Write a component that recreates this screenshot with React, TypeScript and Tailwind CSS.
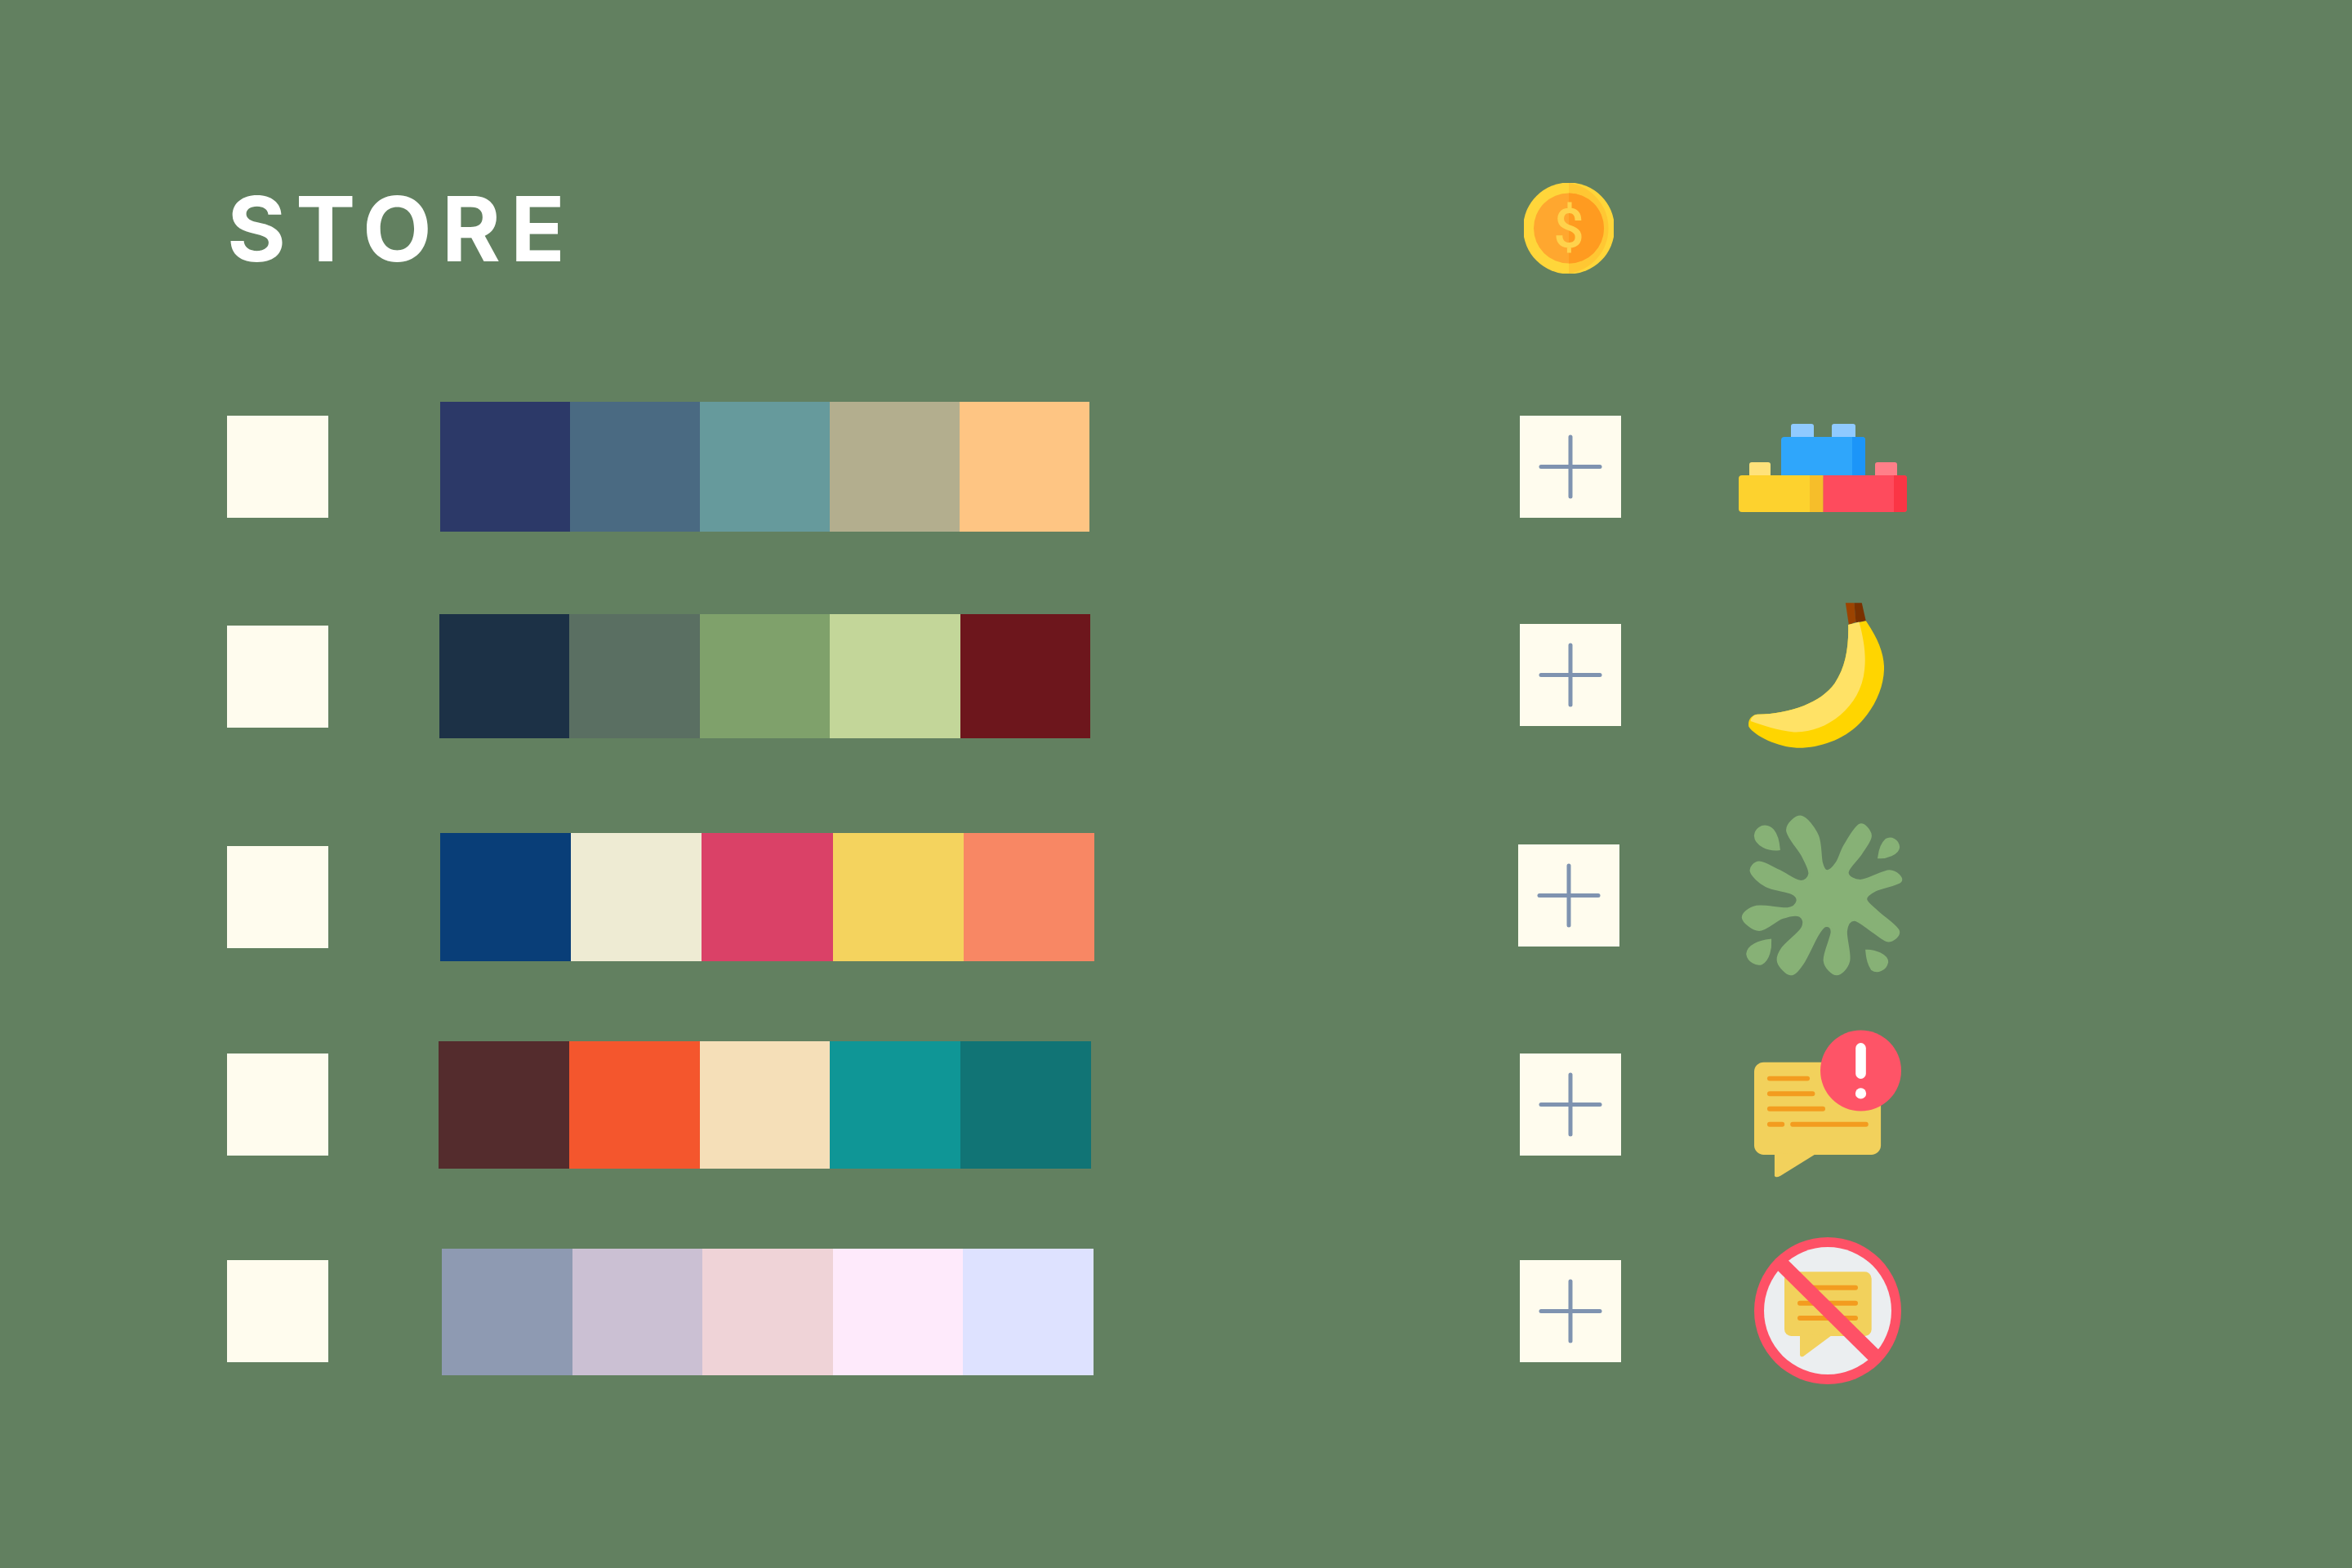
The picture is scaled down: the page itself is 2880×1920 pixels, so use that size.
function Coin() {
  return (
    <svg width="110" height="111" viewBox="0 0 110 111" className="ml-[1174px]">
      <circle cx="55" cy="55.5" r="56" fill="#ffd63a" />
      <path d="M55 0 A56 56 0 0 1 55 111 Z" fill="#ffc733" />
      <circle cx="55" cy="55.5" r="43" fill="#ffa72f" />
      <path d="M55 12.5 A43 43 0 0 1 55 98.5 Z" fill="#ff9b20" />
      <text x="55" y="79" textAnchor="middle" fontSize="66" fontWeight="500" fill="#ffd24c" fontFamily="Roboto, sans-serif">
        $
      </text>
    </svg>
  );
}

function Lego() {
  return (
    <svg width="206" height="108" viewBox="0 0 206 108">
      <rect x="64" y="0" width="28" height="20" rx="3" fill="#90caff" />
      <rect x="114" y="0" width="29" height="20" rx="3" fill="#90caff" />
      <rect x="52" y="16" width="103" height="50" rx="4" fill="#2fa6fb" />
      <path d="M139 16 H151 a4 4 0 0 1 4 4 V66 H139 Z" fill="#1c95f8" />
      <rect x="13" y="47" width="26" height="20" rx="3" fill="#ffe27a" />
      <rect x="167" y="47" width="27" height="20" rx="3" fill="#ff7f89" />
      <path d="M4 63 H103.5 V108 H4 a4 4 0 0 1 -4 -4 V67 a4 4 0 0 1 4 -4 Z" fill="#fdd22e" />
      <rect x="87" y="63" width="16.5" height="45" fill="#f6be2a" />
      <path d="M103.5 63 H202 a4 4 0 0 1 4 4 V104 a4 4 0 0 1 -4 4 H103.5 Z" fill="#fe4b5d" />
      <path d="M190 63 H202 a4 4 0 0 1 4 4 V104 a4 4 0 0 1 -4 4 H190 Z" fill="#fb3545" />
    </svg>
  );
}

function Banana() {
  return (
    <svg width="166" height="178" viewBox="182 54 500 534">
      <path d="M540 54 L572 54 L578 124 L552 134 Z" fill="#9c4300" />
      <path d="M572 54 L600 54 L615 120 L578 126 Z" fill="#7a3100" />
      <path
        d="M550 134 L615 120 C660 185 684 245 682 300 C680 370 645 445 590 500 C530 560 440 590 360 588 C290 585 205 545 183 510 C178 485 195 466 215 465 C340 462 450 420 500 350 C540 290 552 220 550 134 Z"
        fill="#ffd500"
      />
      <path
        d="M550 134 L590 124 C608 190 616 245 610 300 C603 370 570 425 520 468 C470 510 410 532 350 530 C290 526 235 505 190 490 C192 476 202 466 215 465 C340 462 450 420 500 350 C540 290 552 220 550 134 Z"
        fill="#ffe266"
      />
    </svg>
  );
}

// smooth closed path through outline points read off the picture
function smooth(p: number[][]) {
  const n = p.length;
  let d = `M${p[0][0]} ${p[0][1]}`;
  for (let i = 0; i < n; i++) {
    const [a, b, c, e] = [p[(i + n - 1) % n], p[i], p[(i + 1) % n], p[(i + 2) % n]];
    d += ` C${b[0] + (c[0] - a[0]) / 6} ${b[1] + (c[1] - a[1]) / 6} ${c[0] - (e[0] - b[0]) / 6} ${c[1] - (e[1] - b[1]) / 6} ${c[0]} ${c[1]}`;
  }
  return d + " Z";
}

const splat = [
  [475, 320], [455, 290], [440, 190], [380, 120], [328, 170], [385, 265], [410, 330], [375, 358], [300, 320], [225, 288],
  [195, 322], [250, 375], [345, 402], [365, 432], [330, 458], [215, 451], [165, 492], [225, 537], [310, 492], [375, 485],
  [383, 530], [310, 605], [295, 655], [340, 700], [385, 660], [440, 555], [470, 522], [492, 545], [465, 650], [510, 700],
  [555, 650], [545, 540], [575, 500], [640, 540], [700, 577], [737, 540], [660, 470], [618, 425], [650, 392], [745, 358],
  [705, 320], [600, 355], [550, 325], [600, 255], [635, 190], [595, 150], [540, 225], [510, 290],
];

function Splat() {
  return (
    <svg width="194" height="193" viewBox="165 120 582 580" fill="#87b176" stroke="#87b176" strokeWidth="8" overflow="visible">
      <path d={smooth(splat)} />
      <path d="M298 240 C260 245 212 225 210 190 C212 165 235 152 255 157 C285 165 295 205 298 240 Z" />
      <path d="M665 270 C690 272 737 258 738 232 C735 205 710 195 692 205 C675 220 668 245 665 270 Z" />
      <path d="M266 574 C225 578 183 595 181 625 C185 652 215 668 235 660 C260 645 268 605 266 574 Z" />
      <path d="M620 613 C650 612 696 630 696 655 C690 685 658 695 640 682 C625 660 622 640 620 613 Z" />
    </svg>
  );
}

function ChatAlert() {
  return (
    <svg width="180" height="181" viewBox="203 123 542 542">
      <rect x="203" y="241" width="467" height="341" rx="35" fill="#f2d15c" />
      <path d="M278 575 L425 582 L300 660 Q280 670 278 658 Z" fill="#f2d15c" />
      <g stroke="#f39c1f" strokeWidth="18" strokeLinecap="round">
        <line x1="260" y1="301" x2="399" y2="301" />
        <line x1="260" y1="357" x2="418" y2="357" />
        <line x1="260" y1="413" x2="456" y2="413" />
        <line x1="260" y1="470" x2="306" y2="470" />
        <line x1="345" y1="470" x2="615" y2="470" />
      </g>
      <circle cx="596" cy="272" r="149" fill="#fe5467" />
      <rect x="577" y="170" width="38" height="132" rx="19" fill="#fff" />
      <circle cx="596" cy="356" r="20" fill="#fff" />
    </svg>
  );
}

function NoChat() {
  return (
    <svg width="180" height="180" viewBox="204 105 540 540">
      <circle cx="474" cy="375" r="270" fill="#fe5166" />
      <circle cx="474" cy="375" r="234" fill="#ebeef0" />
      <rect x="315" y="232" width="320" height="236" rx="25" fill="#f2d15c" />
      <path d="M372 460 L485 468 L385 542 Q372 548 372 535 Z" fill="#f2d15c" />
      <g stroke="#f39c1f" strokeWidth="18" strokeLinecap="round">
        <line x1="372" y1="290" x2="576" y2="290" />
        <line x1="372" y1="347" x2="576" y2="347" />
        <line x1="372" y1="402" x2="576" y2="402" />
      </g>
      <line x1="297" y1="196" x2="653" y2="548" stroke="#fe5166" strokeWidth="54" />
    </svg>
  );
}

function PlusBox({ className }: { className: string }) {
  return (
    <div className={`w-[124px] h-[125px] bg-[#fffcee] flex items-center justify-center ${className}`}>
      <svg width="78" height="79" viewBox="0 0 78 79" stroke="#7f93b0" strokeWidth="5" strokeLinecap="round">
        <line x1="3" y1="39.5" x2="75" y2="39.5" />
        <line x1="39" y1="3" x2="39" y2="76" />
      </svg>
    </div>
  );
}

const rows = [
  {
    row: "h-[159px] mt-[157px]",
    box: "mt-[17px]",
    palette: "ml-[137px] w-[795px] h-[159px]",
    plus: "ml-[527px] mt-[17px]",
    icon: "ml-[144px] mt-[27px]",
    colors: ["bg-[#2c3968]", "bg-[#4a6a82]", "bg-[#669a9c]", "bg-[#b3ae8e]", "bg-[#fec583]"],
    Icon: Lego,
  },
  {
    row: "h-[152px] mt-[101px]",
    box: "mt-[14px]",
    palette: "ml-[136px] w-[797px] h-[152px]",
    plus: "ml-[526px] mt-[12px]",
    icon: "ml-[156px] mt-[-14px]",
    colors: ["bg-[#1c3146]", "bg-[#5a6f62]", "bg-[#7fa16b]", "bg-[#c3d699]", "bg-[#6d161c]"],
    Icon: Banana,
  },
  {
    row: "h-[157px] mt-[116px]",
    box: "mt-[16px]",
    palette: "ml-[137px] w-[801px] h-[157px]",
    plus: "ml-[519px] mt-[14px]",
    icon: "ml-[151px] mt-[-20px]",
    colors: ["bg-[#093e78]", "bg-[#eeebd3]", "bg-[#da4167]", "bg-[#f4d35e]", "bg-[#f88764]"],
    Icon: Splat,
  },
  {
    row: "h-[156px] mt-[98px]",
    box: "mt-[15px]",
    palette: "ml-[135px] w-[799px] h-[156px]",
    plus: "ml-[525px] mt-[15px]",
    icon: "ml-[163px] mt-[-14px]",
    colors: ["bg-[#542c2d]", "bg-[#f4562d]", "bg-[#f5dfb8]", "bg-[#0f9696]", "bg-[#117475]"],
    Icon: ChatAlert,
  },
  {
    row: "h-[155px] mt-[98px]",
    box: "mt-[14px]",
    palette: "ml-[139px] w-[798px] h-[155px]",
    plus: "ml-[522px] mt-[14px]",
    icon: "ml-[163px] mt-[-14px]",
    colors: ["bg-[#8e9ab2]", "bg-[#cbc0d3]", "bg-[#efd3d7]", "bg-[#feeafb]", "bg-[#dee2ff]"],
    Icon: NoChat,
  },
];

export default function App() {
  return (
    <div className="w-[2880px] h-[1920px] bg-[#628060] pt-[224px] overflow-hidden">
      <div className="flex items-center h-[111px] pl-[278px]">
        <h1 className="w-[414px] font-['Inter',sans-serif] font-[750] text-[110px] leading-none tracking-[12px] text-white whitespace-nowrap">
          STORE
        </h1>
        <Coin />
      </div>

      {rows.map(({ row, box, palette, plus, icon, colors, Icon }, i) => (
        <div key={i} className={`flex items-start pl-[278px] ${row}`}>
          <div className={`w-[124px] h-[125px] bg-[#fffcee] ${box}`} />
          <div className={`flex ${palette}`}>
            {colors.map((c) => (
              <div key={c} className={`flex-1 ${c}`} />
            ))}
          </div>
          <PlusBox className={plus} />
          <div className={icon}>
            <Icon />
          </div>
        </div>
      ))}
    </div>
  );
}
